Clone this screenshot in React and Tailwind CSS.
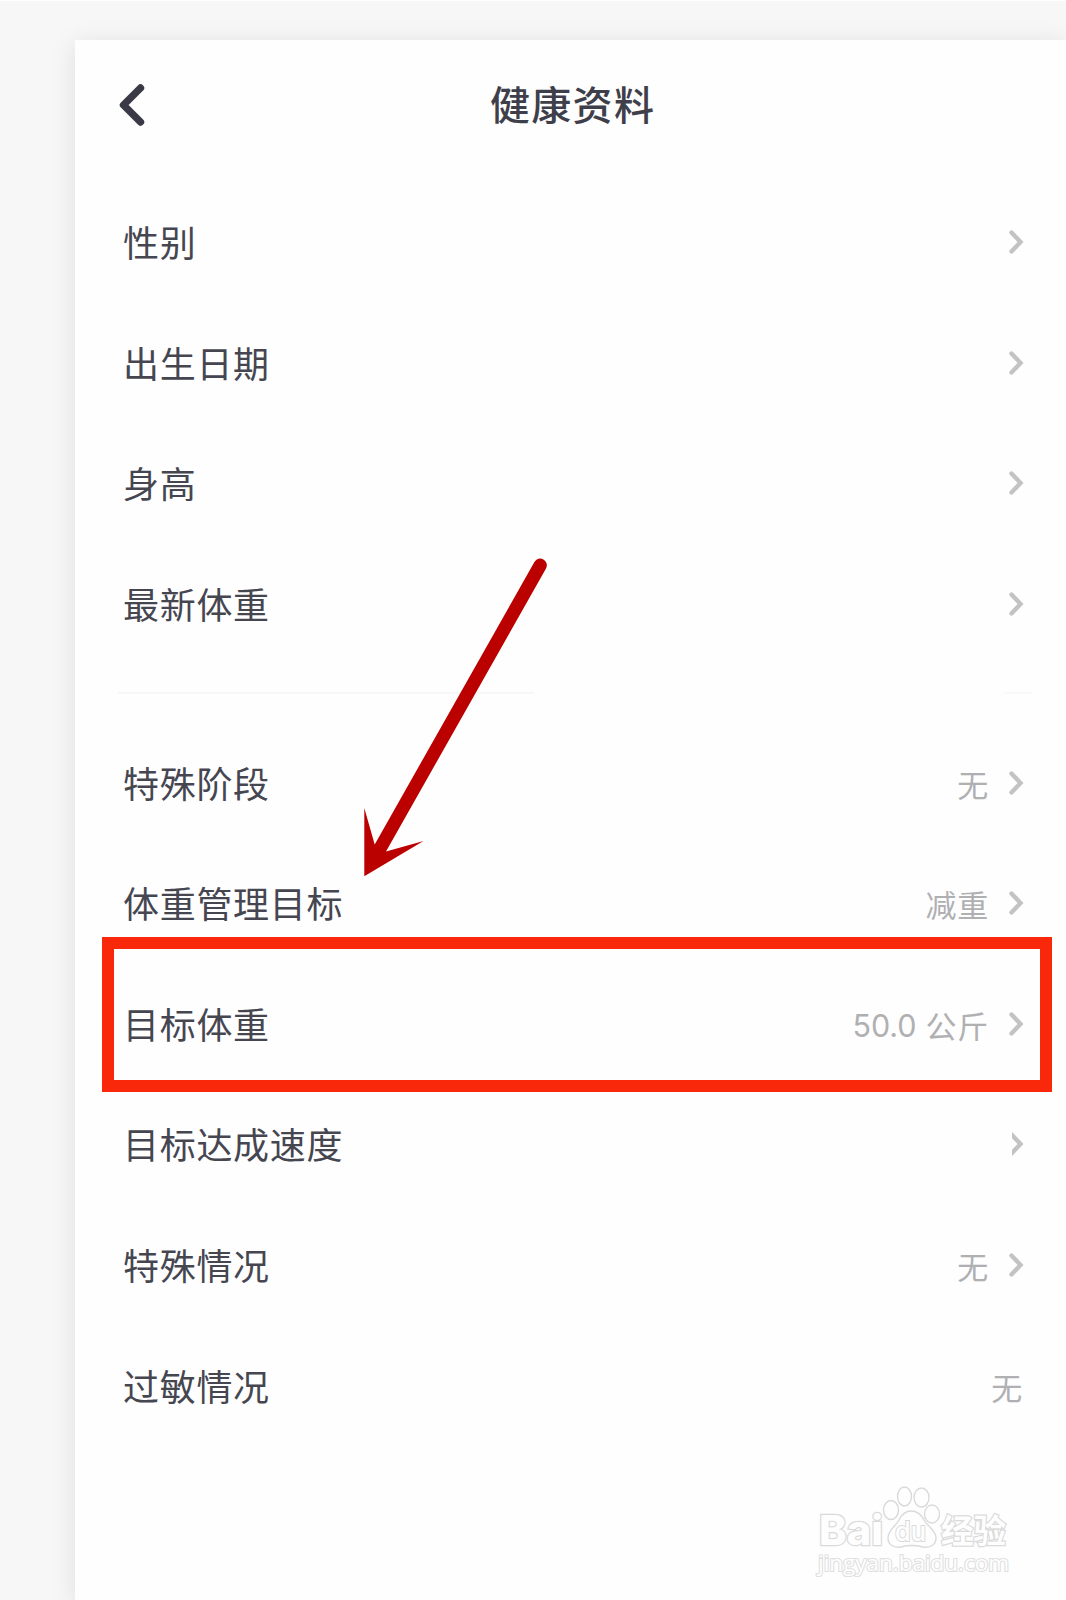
import React from "react";

const basicRows = [
  { label: "性别" },
  { label: "出生日期" },
  { label: "身高" },
  { label: "最新体重" },
];

const goalRows = [
  { label: "特殊阶段", value: "无" },
  { label: "体重管理目标", value: "减重" },
  { label: "目标体重", amount: "50.0", value: "公斤" },
  { label: "目标达成速度", cutArrow: true },
  { label: "特殊情况", value: "无" },
  { label: "过敏情况", value: "无", noArrow: true },
];

const Chevron = ({ cut }) => (
  <svg
    className={
      cut
        ? "ml-[18px] mr-[3px] w-[18px] h-[26px] shrink-0 [clip-path:inset(0_0_0_5px)]"
        : "ml-[18px] mr-[3px] w-[18px] h-[26px] shrink-0"
    }
    viewBox="0 0 18 26"
    fill="none"
  >
    <path
      d="M4.5 3.5L13.5 13L4.5 22.5"
      stroke="#c4c3c4"
      strokeWidth="4.4"
      strokeLinecap="round"
      strokeLinejoin="miter"
    />
  </svg>
);

const Row = ({ label, amount, value, noArrow, cutArrow }) => (
  <div className="flex items-center justify-between h-[120.6px]">
    <span className="pb-[2px] text-[36px] leading-none tracking-[0.7px] text-[#464651]">{label}</span>
    <div className={noArrow ? "flex items-center pr-[5px]" : "flex items-center"}>
      <div className="flex items-center gap-[9px] pt-[1px] text-[31px] leading-none text-[#b0b0b3]">
        {amount && (
          <span className="pt-[4px] text-[30.5px] tracking-[-0.1px] font-['Inter',sans-serif]">{amount}</span>
        )}
        {value && <span className="tracking-[0.8px]">{value}</span>}
      </div>
      {!noArrow && <Chevron cut={cutArrow} />}
    </div>
  </div>
);

const Arrow = () => (
  <svg className="absolute left-[360px] top-[554px] w-[192px] h-[325px]" viewBox="360 555 192 325">
    <path
      d="M534.4 562A6.5 6.5 0 0 1 546 568.5L386 851.5L423.5 841L364.3 876.2V808L374.7 844.5Z"
      fill="#bb0000"
    />
  </svg>
);

// Outlined watermark in the bottom corner
const Watermark = () => (
  <svg
    className="absolute left-[810px] top-[1480px] w-[210px] h-[105px]"
    viewBox="810 1480 210 105"
    fill="#fefefe"
    stroke="#dadada"
    strokeWidth="1.4"
  >
    <text x="819" y="1544" fontSize="41" fontFamily="Inter, sans-serif" fontWeight="800" strokeWidth="2.4" paintOrder="stroke" textLength="64" lengthAdjust="spacingAndGlyphs">Bai</text>
    <ellipse cx="891" cy="1509" rx="7.5" ry="9.5" />
    <ellipse cx="904.5" cy="1495.5" rx="7" ry="9.5" />
    <ellipse cx="921.5" cy="1496.5" rx="7.5" ry="9.5" />
    <ellipse cx="932" cy="1513" rx="7.5" ry="9" />
    <path d="M911 1510C917 1510 921 1513 924 1519C928 1526 936 1529 936 1537C936 1544 930 1547 923 1546C915 1544 908 1544 901 1546C894 1547 888 1544 888 1537C888 1529 895 1526 899 1519C902 1513 906 1510 911 1510Z" />
    <text x="895" y="1540" fontSize="27" fontFamily="Inter, sans-serif" fontWeight="500" strokeWidth="2" paintOrder="stroke" textLength="31" lengthAdjust="spacingAndGlyphs">du</text>
    <text x="941" y="1542" fontSize="32.5" fontFamily="Noto Sans CJK SC, sans-serif" fontWeight="700" strokeWidth="2.4" paintOrder="stroke">经验</text>
    <text x="818" y="1570" fontSize="22" fontFamily="Open Sans, sans-serif" fontWeight="400" stroke="#e0e0e0" strokeWidth="2.2" paintOrder="stroke" textLength="191" lengthAdjust="spacingAndGlyphs">jingyan.baidu.com</text>
  </svg>
);

const App = () => {
  return (
    <div className="relative w-[1066px] h-[1600px] overflow-hidden bg-[#f7f7f7] pl-[75px] pt-[39px] border-t border-[#fdfdfd] box-border font-['Noto_Sans_CJK_SC',sans-serif]">
      <div className="h-[1560px] bg-[#fefefe] shadow-[0_4px_24px_rgba(0,0,0,0.1)] pl-[48px] pr-[38px]">
        {/* Header */}
        <header className="flex items-center h-[130px]">
          <svg className="-ml-[7px] w-[32px] h-[48px]" viewBox="0 0 32 48" fill="none">
            <path
              d="M24.5 7L7.5 24L24.5 41"
              stroke="#3a3a47"
              strokeWidth="7.4"
              strokeLinecap="round"
              strokeLinejoin="round"
            />
          </svg>
          <h1 className="ml-[342px] pb-[4px] text-[40px] leading-none tracking-[1.3px] font-medium text-[#3f3f4c]">
            健康资料
          </h1>
        </header>

        {/* Basic info */}
        <div className="mt-[12px]">
          {basicRows.map((row) => (
            <Row key={row.label} {...row} />
          ))}
        </div>

        <div className="flex justify-between mt-[28px] mb-[28px] -ml-[5px] -mr-[4px]">
          <div className="w-[416px] h-[2px] bg-[#f7f7f7]" />
          <div className="w-[28px] h-[2px] bg-[#f9f9f9]" />
        </div>

        {/* Goals */}
        <div>
          {goalRows.map((row) => (
            <Row key={row.label} {...row} />
          ))}
        </div>
      </div>

      <div className="absolute left-[102px] top-[936px] w-[950px] h-[155px] border-[12px] border-[#fa280b]" />
      <Arrow />
      <Watermark />
    </div>
  );
};

export default App;
